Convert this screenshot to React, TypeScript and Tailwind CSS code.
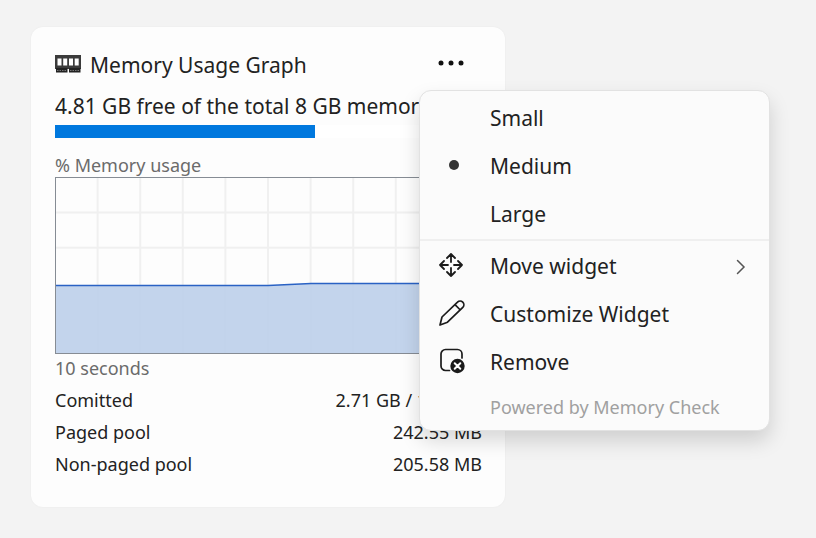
import type { ReactNode } from 'react'

const POOLS = [
  { label: 'Comitted', value: '2.71 GB / 10.2 GB' },
  { label: 'Paged pool', value: '242.55 MB' },
  { label: 'Non-paged pool', value: '205.58 MB' },
]

const SIZES = ['Small', 'Medium', 'Large']
const CURRENT_SIZE = 'Medium'

const USED_PERCENT = 61

export default function App() {
  return (
    <div className="min-h-screen bg-[#f3f3f3] px-[31px] py-[27px] font-['Noto_Sans','Open_Sans',sans-serif] text-[#222222]">
      <main className="relative w-full max-w-[474px] rounded-xl bg-[#fdfdfd] pt-5 pr-[23px] pb-[27px] pl-6 shadow-[0_0_2px_rgba(0,0,0,0.05)]">
        <header className="flex h-9 items-center">
          <MemoryIcon />
          <h1 className="ml-2 flex-1 text-[21px] leading-9">Memory Usage Graph</h1>
          <button type="button" aria-label="More options" aria-haspopup="menu" aria-expanded="true" className="mr-[15px] mb-1 flex h-6 w-8 items-center justify-center">
            <svg width="26" height="6" viewBox="0 0 26 6" fill="#111111" aria-hidden>
              <circle cx="3" cy="3" r="2.5" />
              <circle cx="13" cy="3" r="2.5" />
              <circle cx="23" cy="3" r="2.5" />
            </svg>
          </button>
        </header>

        <p className="mt-2 overflow-hidden text-[21px] leading-[30px] whitespace-nowrap">4.81 GB free of the total 8 GB memory</p>
        <div role="progressbar" aria-label="Memory in use" aria-valuenow={USED_PERCENT} aria-valuemin={0} aria-valuemax={100} className="mt-1 h-[13px] bg-white">
          <div className="h-full bg-[#0078de]" style={{ width: `${USED_PERCENT}%` }} />
        </div>

        <div className="mt-[15px] text-lg leading-6 text-[#6b6b6b]">% Memory usage</div>
        <UsageChart />
        <div className="mt-0.5 text-lg leading-6 text-[#6b6b6b]">10 seconds</div>

        <table className="mt-1 w-full text-lg">
          <tbody>
            {POOLS.map(pool => (
              <tr key={pool.label} className="h-8">
                <th scope="row" className="p-0 text-left font-normal">{pool.label}</th>
                <td className="p-0 text-right">{pool.value}</td>
              </tr>
            ))}
          </tbody>
        </table>

        <WidgetMenu />
      </main>
    </div>
  )
}

function WidgetMenu() {
  return (
    <div role="menu" className="absolute top-[63px] left-[388px] w-[351px] rounded-xl border border-[#e2e2e2] bg-[#fbfbfb] pt-1 pb-[3px] shadow-[0_10px_20px_rgba(0,0,0,0.15)]">
      {SIZES.map(size => (
        <MenuItem key={size} role="menuitemradio" checked={size === CURRENT_SIZE} label={size}>
          {size === CURRENT_SIZE && <span className="ml-2.5 block size-2.5 rounded-full bg-[#333333]" />}
        </MenuItem>
      ))}
      <div role="separator" className="mb-0.5 h-0.5 bg-[#efefef]" />
      <MenuItem label="Move widget" hasSubmenu>
        <MoveIcon />
      </MenuItem>
      <MenuItem label="Customize Widget">
        <PencilIcon />
      </MenuItem>
      <MenuItem label="Remove">
        <RemoveIcon />
      </MenuItem>
      <div className="pl-[70px] text-lg leading-10 text-[#a0a0a0]">Powered by Memory Check</div>
    </div>
  )
}

type MenuItemProps = {
  label: string
  role?: 'menuitem' | 'menuitemradio'
  checked?: boolean
  hasSubmenu?: boolean
  children?: ReactNode
}

function MenuItem({ label, role = 'menuitem', checked, hasSubmenu, children }: MenuItemProps) {
  return (
    <button
      type="button"
      role={role}
      aria-checked={checked}
      aria-haspopup={hasSubmenu ? 'menu' : undefined}
      className="flex h-12 w-full items-center pr-[23px] pl-[19px] text-left text-[21px]"
    >
      <span className="mb-1 w-[51px] shrink-0">{children}</span>
      <span className="flex-1">{label}</span>
      {hasSubmenu && (
        <svg width="10" height="16" viewBox="0 0 10 16" fill="none" stroke="#555555" strokeWidth="1.5" strokeLinecap="round" aria-hidden>
          <path d="M1.5 1.5 8 8l-6.5 6.5" />
        </svg>
      )}
    </button>
  )
}

function UsageChart() {
  return (
    <svg viewBox="0 0 427 177" className="block w-full" fill="none" role="img" aria-label="Memory usage over the last 10 seconds">
      <g stroke="#f0f0f0" strokeWidth="2">
        {[1, 2, 3, 4, 5, 6, 7, 8, 9].map(i => (
          <path key={i} d={`M${i * 42.6} 0v177`} />
        ))}
        {[1, 2].map(i => (
          <path key={i} d={`M0 ${i * 35.4}h427`} />
        ))}
      </g>
      <path d="M0 108.5H213L256 106.5H427V177H0z" fill="#bccfea" fillOpacity="0.9" />
      <path d="M0 108.5H213L256 106.5H427" stroke="#2a62c4" strokeWidth="1.3" />
      <rect x="0.5" y="0.5" width="426" height="176" stroke="#868c94" />
    </svg>
  )
}

function MemoryIcon() {
  return (
    <svg width="27" height="20" viewBox="0 0 27 20" aria-hidden>
      <path d="M0 0h26v14H0z" fill="#3b3b3b" />
      <path d="M2.5 3.500h4v7h-4zM8.200 3.500h4v7h-4zM14 3.500h4v7h-4zM19.700 3.500h4v7h-4z" fill="#ffffff" />
      <path d="M1 13h11.500v4.500H1zM14 13h11.500v4.500H14z" fill="#222222" />
      <path d="M2 15.500h10M15 15.500h10" stroke="#777777" strokeDasharray="1.5 1" />
    </svg>
  )
}

function MoveIcon() {
  return (
    <svg width="24" height="24" viewBox="0 0 24 24" fill="none" stroke="#1b1b1b" strokeWidth="1.8" strokeLinecap="round" strokeLinejoin="round" aria-hidden>
      <path d="M12 9V1M8 5l4-4 4 4" />
      <path d="M12 15v8M8 19l4 4 4-4" />
      <path d="M9 12H1M5 8l-4 4 4 4" />
      <path d="M15 12h8M19 8l4 4-4 4" />
    </svg>
  )
}

function PencilIcon() {
  return (
    <svg width="26" height="26" viewBox="0 0 26 26" fill="none" stroke="#1b1b1b" strokeWidth="1.7" strokeLinejoin="round" aria-hidden>
      <path d="M18.500 2.200a3.700 3.700 0 0 1 5.300 5.200L8.500 22.200 1 25l2-8z" />
      <path d="m16 4.700 5.300 5.300" />
    </svg>
  )
}

function RemoveIcon() {
  return (
    <svg width="26" height="26" viewBox="0 0 26 26" fill="none" aria-hidden>
      <path d="M10.5 22.5h-4A4.500 4.500 0 0 1 2 18V6a4.500 4.500 0 0 1 4.500-4.500h12A4.500 4.500 0 0 1 23 6v4" stroke="#1b1b1b" strokeWidth="1.7" strokeLinecap="round" />
      <circle cx="18.500" cy="18" r="7.200" fill="#1b1b1b" />
      <path d="m15.700 15.200 5.600 5.600M21.300 15.200l-5.600 5.600" stroke="#ffffff" strokeWidth="2" strokeLinecap="round" />
    </svg>
  )
}
